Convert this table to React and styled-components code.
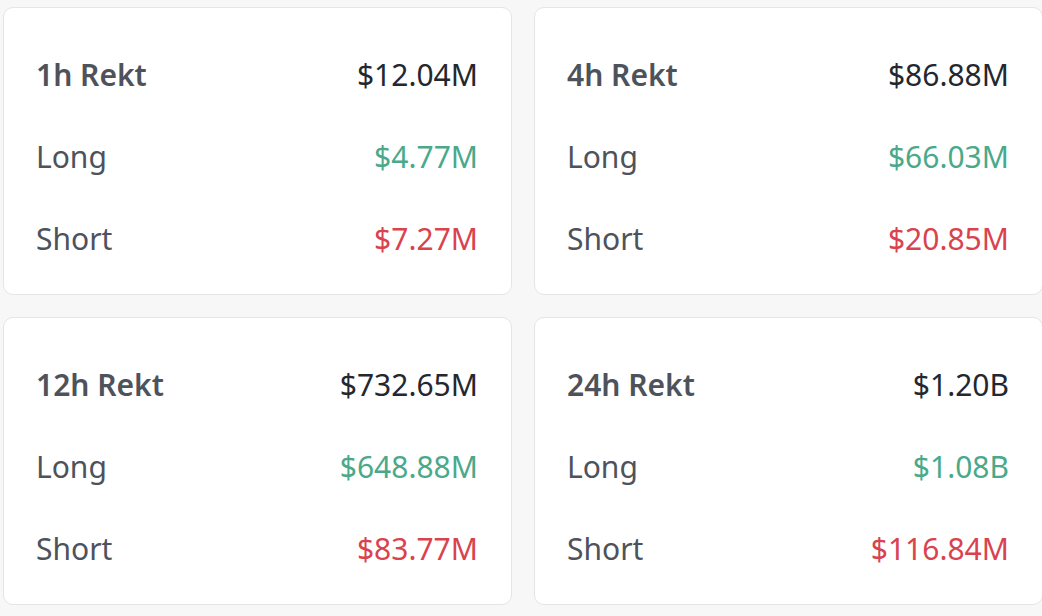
import React from "react";
import styled, { createGlobalStyle } from "styled-components";

const Global = createGlobalStyle`
  html, body { margin: 0; padding: 0; background: #f7f7f7; }
  body { font-family: "Noto Sans", "Open Sans", sans-serif; }
`;

const Page = styled.div`
  padding: 7px 0 0 3px;
  width: 1042px;
  height: 616px;
  box-sizing: border-box;
  overflow: hidden;
`;

const Grid = styled.div`
  display: grid;
  grid-template-columns: 509px 509px;
  grid-auto-rows: 288px;
  gap: 22px;
`;

const Card = styled.div`
  background: #ffffff;
  border: 1px solid #e4e5e7;
  border-radius: 10px;
  box-sizing: border-box;
  padding: 26px 33px 14px 32px;
  display: flex;
  flex-direction: column;
`;

const Row = styled.div`
  height: 82px;
  display: flex;
  align-items: center;
  justify-content: space-between;
  font-size: 30px;
  line-height: 1;
`;

const Label = styled.span`
  color: #4d525b;
  font-weight: ${(p) => (p.$bold ? 600 : 400)};
`;

const colors = {
  total: "#24282e",
  long: "#4aa98a",
  short: "#d9434e",
};

const Value = styled.span`
  color: ${(p) => colors[p.$kind]};
  font-weight: 400;
`;

const data = [
  { t: "1h", total: "$12.04M", long: "$4.77M", short: "$7.27M" },
  { t: "4h", total: "$86.88M", long: "$66.03M", short: "$20.85M" },
  { t: "12h", total: "$732.65M", long: "$648.88M", short: "$83.77M" },
  { t: "24h", total: "$1.20B", long: "$1.08B", short: "$116.84M" },
];

export default function App() {
  return (
    <>
      <Global />
      <Page>
        <Grid>
          {data.map((d) => (
            <Card key={d.t}>
              <Row>
                <Label $bold>{d.t} Rekt</Label>
                <Value $kind="total">{d.total}</Value>
              </Row>
              <Row>
                <Label>Long</Label>
                <Value $kind="long">{d.long}</Value>
              </Row>
              <Row>
                <Label>Short</Label>
                <Value $kind="short">{d.short}</Value>
              </Row>
            </Card>
          ))}
        </Grid>
      </Page>
    </>
  );
}
